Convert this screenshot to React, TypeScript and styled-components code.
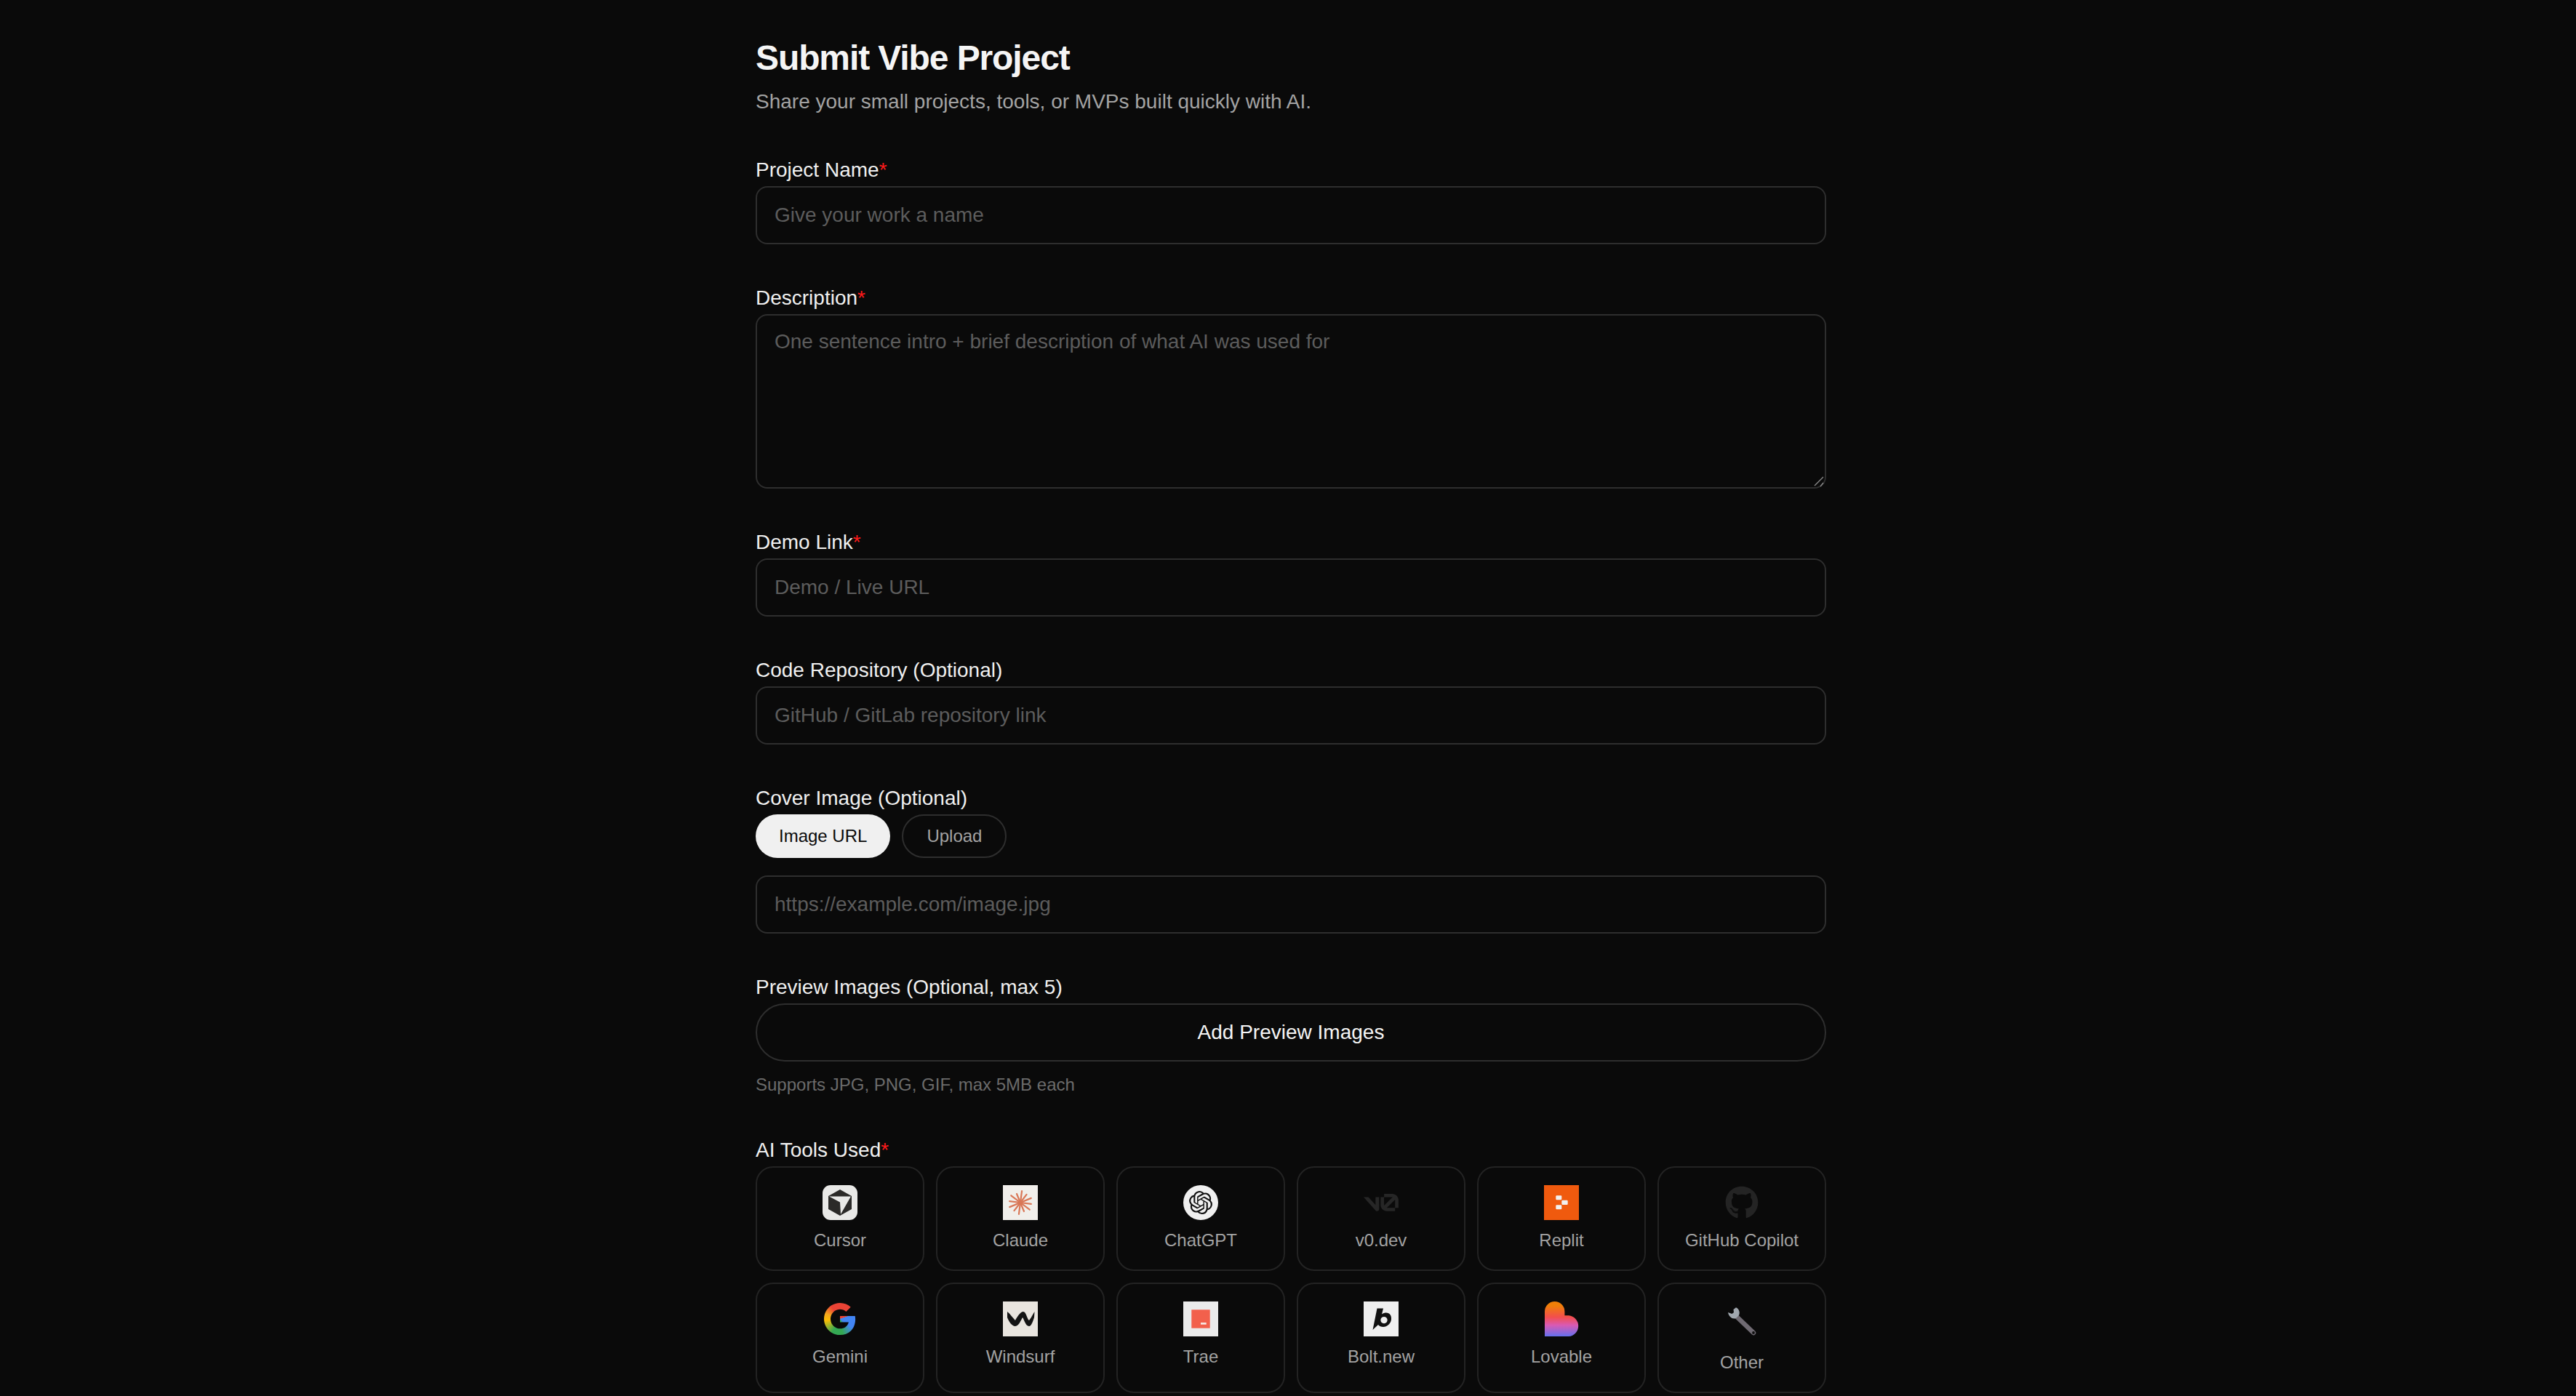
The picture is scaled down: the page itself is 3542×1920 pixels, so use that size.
import React from "react"
import styled, { createGlobalStyle } from "styled-components"
import { FaGithub } from "react-icons/fa"
import { SiOpenai } from "react-icons/si"

const GlobalStyle = createGlobalStyle`
  html, body {
    margin: 0;
    height: 100%;
    background: #0a0a0a;
    overflow: hidden;
  }
  * {
    box-sizing: border-box;
  }
`

const Page = styled.main`
  height: 1920px;
  overflow: hidden;
  background: #0a0a0a;
  padding: 48px 0 0 1039px;
  font-family: "Liberation Sans", Arial, sans-serif;
`

const Form = styled.form`
  width: 1472px;
  display: flex;
  flex-direction: column;
  gap: 56px;
`

const Header = styled.header`
  display: flex;
  flex-direction: column;
  gap: 8px;
`

const Title = styled.h1`
  margin: 0;
  font-size: 48px;
  line-height: 64px;
  font-weight: 700;
  letter-spacing: -1.1px;
  color: #f5f5f5;
`

const Subtitle = styled.p`
  margin: 0;
  font-size: 28px;
  line-height: 40px;
  color: #a3a3a3;
`

const Field = styled.div`
  display: flex;
  flex-direction: column;
`

const Label = styled.label`
  display: block;
  font-size: 28px;
  line-height: 36px;
  padding-bottom: 4px;
  color: #f0f0f0;
`

const Required = styled.span`
  color: #ff1a1a;
`

const TextInput = styled.input`
  display: block;
  width: 100%;
  height: 80px;
  padding: 0 24px;
  background: transparent;
  border: 2px solid #2e2e2e;
  border-radius: 16px;
  outline: none;
  font: inherit;
  font-size: 28px;
  color: #f5f5f5;

  &::placeholder {
    color: #5c5c5c;
    opacity: 1;
  }
`

const TextAreaWrap = styled.div`
  position: relative;
`

const TextArea = styled.textarea`
  display: block;
  width: 100%;
  height: 240px;
  padding: 16px 24px;
  background: transparent;
  border: 2px solid #2e2e2e;
  border-radius: 16px;
  outline: none;
  font: inherit;
  font-size: 28px;
  line-height: 40px;
  color: #f5f5f5;
  resize: none;

  &::placeholder {
    color: #5c5c5c;
    opacity: 1;
  }
`

const ResizeGrip = styled.svg`
  position: absolute;
  right: 2px;
  bottom: 2px;
  width: 16px;
  height: 16px;
  pointer-events: none;
`

const ModeTabs = styled.div`
  display: flex;
  gap: 16px;
  margin-bottom: 24px;
`

const ModeTab = styled.button<{ $active?: boolean }>`
  height: 60px;
  padding: 0 32px;
  border-radius: 30px;
  border: ${(p) => (p.$active ? "none" : "2px solid #2e2e2e")};
  background: ${(p) => (p.$active ? "#f0f0f0" : "transparent")};
  color: ${(p) => (p.$active ? "#0a0a0a" : "#a3a3a3")};
  font: inherit;
  font-size: 24px;
`

const AddButton = styled.button`
  display: block;
  width: 100%;
  height: 80px;
  background: transparent;
  border: 2px solid #2e2e2e;
  border-radius: 40px;
  color: #f5f5f5;
  font: inherit;
  font-size: 28px;
`

const Hint = styled.p`
  margin: 16px 0 0;
  font-size: 24px;
  line-height: 32px;
  color: #6b6b6b;
`

const ToolGrid = styled.div`
  display: grid;
  grid-template-columns: repeat(6, 1fr);
  gap: 16px;
`

const ToolCard = styled.button`
  display: flex;
  flex-direction: column;
  align-items: center;
  justify-content: flex-start;
  gap: 12px;
  padding: 24px 8px;
  background: transparent;
  border: 2px solid #232323;
  border-radius: 24px;
  font: inherit;
`

const ToolName = styled.span`
  font-size: 24px;
  line-height: 32px;
  color: #a3a3a3;
`

const LogoRound = styled.span`
  display: flex;
  align-items: center;
  justify-content: center;
  width: 48px;
  height: 48px;
  border-radius: 50%;
  background: #f0f0f0;
  color: #111;
`

const LogoBare = styled.span`
  display: flex;
  align-items: center;
  justify-content: center;
  width: 48px;
  height: 48px;
  color: #242424;
`

const GoogleG = styled.span`
  display: block;
  width: 48px;
  height: 48px;
  background: conic-gradient(
    from 0deg at 24px 24px,
    #ea4335 0deg,
    #ea4335 70deg,
    #4285f4 70deg,
    #4285f4 125deg,
    #34a853 170deg,
    #34a853 210deg,
    #fbbc05 265deg,
    #f4a71d 290deg,
    #ea4335 325deg,
    #ea4335 360deg
  );
  clip-path: path("M45.12 24.5c0-1.56-.14-3.06-.4-4.5H24v8.51h11.84c-.51 2.75-2.06 5.08-4.39 6.64v5.52h7.11c4.16-3.83 6.56-9.47 6.56-16.17zM24 46c5.94 0 10.92-1.97 14.56-5.33l-7.11-5.52c-1.97 1.32-4.49 2.12-7.45 2.12-5.73 0-10.58-3.87-12.31-9.07H4.34v5.7C7.96 41.07 15.4 46 24 46zM11.69 28.18C11.25 26.86 11 25.45 11 24s.25-2.86.69-4.18v-5.7H4.34C2.85 17.09 2 20.45 2 24c0 3.55.85 6.91 2.34 9.88l7.35-5.7zM24 10.75c3.23 0 6.13 1.11 8.41 3.29l6.31-6.31C34.91 4.18 29.93 2 24 2 15.4 2 7.96 6.93 4.34 14.12l7.35 5.7c1.73-5.2 6.58-9.07 12.31-9.07z");
`

const CursorLogo = () => (
  <svg width="48" height="48" viewBox="0 0 48 48">
    <rect width="48" height="48" rx="11" fill="#e9e9e7" />
    <path d="M24 6l16 9v18l-16 9-16-9V15z" fill="#2b2a28" />
    <path d="M9 15.5h30L25 40l-1-16.5z" fill="#e9e9e7" />
  </svg>
)

const ClaudeLogo = () => {
  const rays = [15, 16, 13, 16, 14, 16, 15, 16, 13, 16, 14, 16]
  return (
    <svg width="48" height="48" viewBox="0 0 48 48">
      <rect width="48" height="48" fill="#f1efeb" />
      {rays.map((len, i) => {
        const a = (i * Math.PI * 2) / rays.length + 0.13
        return (
          <line
            key={i}
            x1="24"
            y1="24"
            x2={24 + Math.cos(a) * len}
            y2={24 + Math.sin(a) * len}
            stroke="#d97757"
            strokeWidth="2.2"
            strokeLinecap="round"
          />
        )
      })}
    </svg>
  )
}

const V0Logo = () => (
  <svg width="48" height="24" viewBox="0 0 40 20" fill="#262626">
    <path d="M23.3919 0H32.9188C36.7819 0 39.9136 3.13165 39.9136 6.99475V16.0805H36.0006V6.99475C36.0006 6.90167 35.9969 6.80925 35.9898 6.71766L26.4628 16.079C26.4949 16.08 26.5272 16.0805 26.5595 16.0805H36.0006V19.7762H26.5595C22.6964 19.7762 19.4788 16.6139 19.4788 12.7508V3.68923H23.3919V12.7508C23.3919 12.9253 23.4054 13.0977 23.4316 13.2668L33.1682 3.6995C33.0861 3.6927 33.003 3.68923 32.9188 3.68923H23.3919V0Z" />
    <path d="M13.7688 19.0956L0 3.68759H5.53933L13.6231 12.7337V3.68759H17.7535V17.5746C17.7535 19.6705 15.1654 20.6584 13.7688 19.0956Z" />
  </svg>
)

const ReplitLogo = () => (
  <svg width="48" height="48" viewBox="0 0 48 48">
    <rect width="48" height="48" fill="#f05a0e" />
    <g fill="#f2f0ee">
      <rect x="16.3" y="14.3" width="8" height="6" rx="1.2" />
      <rect x="24.3" y="20.7" width="8.4" height="6.2" rx="1.2" />
      <rect x="16.3" y="27.3" width="8" height="6" rx="1.2" />
    </g>
  </svg>
)

const WindsurfLogo = () => (
  <svg width="48" height="48" viewBox="0 0 48 48">
    <rect width="48" height="48" fill="#e9e5df" />
    <path
      d="M6 14C10 17 13 22 17 26C19 22 24 14 28 14C32 14 33 24 36 26C38 24 41 18 43.5 14L43 22C41 28 39 34 36 34C31 34 29 24 27 22C25 25 22 34 17 34C12 34 8 27 6 22Z"
      fill="#141414"
    />
  </svg>
)

const TraeLogo = () => (
  <svg width="48" height="48" viewBox="0 0 48 48">
    <rect width="48" height="48" fill="#ebebeb" />
    <rect x="11.3" y="11.3" width="25.4" height="25.4" fill="#f2604c" />
    <rect x="24" y="29" width="7.7" height="2.7" fill="#f5e6e2" />
  </svg>
)

const BoltLogo = () => (
  <svg width="48" height="48" viewBox="0 0 48 48">
    <rect width="48" height="48" fill="#efefef" />
    <path
      fillRule="evenodd"
      d="M18.5 9.5H27L25 17.5C27 16 29 15.5 31 15.5C36 15.5 38.5 19.5 38 24.5C37.5 30.5 32 35 27 35C24 35 21.5 34 20 32L12.5 39ZM28 21a4.6 4.6 0 1 0 .01 0Z"
      fill="#111"
    />
  </svg>
)

const LovableLogo = () => (
  <svg width="48" height="48" viewBox="0 0 48 48">
    <defs>
      <linearGradient id="lovable" x1="0" y1="0" x2="0" y2="1">
        <stop offset="0.12" stopColor="#ef7f08" />
        <stop offset="0.45" stopColor="#f24e4e" />
        <stop offset="0.68" stopColor="#d95ab4" />
        <stop offset="1" stopColor="#6470ee" />
      </linearGradient>
    </defs>
    <path
      d="M1 14A13.7 14 0 0 1 28.4 14V19.3H34A14.4 14.4 0 0 1 34 48H1Z"
      fill="url(#lovable)"
    />
  </svg>
)

const WrenchLogo = () => (
  <svg width="56" height="56" viewBox="0 0 56 56">
    <line
      x1="20"
      y1="20"
      x2="44"
      y2="43"
      stroke="#6f6a72"
      strokeWidth="6.5"
      strokeLinecap="round"
    />
    <path
      d="M9 15L14.5 17L17 15L16.5 11L20 8.3C24 10 26 15 24 19L20 23C15 25 10 21 9 15Z"
      fill="#a0a7ae"
    />
    <circle cx="44" cy="43" r="1.9" fill="#111" />
  </svg>
)

const firstRow = [
  { name: "Cursor", logo: <CursorLogo /> },
  { name: "Claude", logo: <ClaudeLogo /> },
  {
    name: "ChatGPT",
    logo: (
      <LogoRound>
        <SiOpenai size={32} />
      </LogoRound>
    ),
  },
  {
    name: "v0.dev",
    logo: (
      <LogoBare>
        <V0Logo />
      </LogoBare>
    ),
  },
  { name: "Replit", logo: <ReplitLogo /> },
  {
    name: "GitHub Copilot",
    logo: (
      <LogoBare>
        <FaGithub size={46} />
      </LogoBare>
    ),
  },
]

const secondRow = [
  { name: "Gemini", logo: <GoogleG /> },
  { name: "Windsurf", logo: <WindsurfLogo /> },
  { name: "Trae", logo: <TraeLogo /> },
  { name: "Bolt.new", logo: <BoltLogo /> },
  { name: "Lovable", logo: <LovableLogo /> },
  { name: "Other", logo: <WrenchLogo /> },
]

export default function App() {
  return (
    <Page>
      <GlobalStyle />
      <Form>
        <Header>
          <Title>Submit Vibe Project</Title>
          <Subtitle>Share your small projects, tools, or MVPs built quickly with AI.</Subtitle>
        </Header>

        <Field>
          <Label>
            Project Name<Required>*</Required>
          </Label>
          <TextInput placeholder="Give your work a name" />
        </Field>

        <Field>
          <Label>
            Description<Required>*</Required>
          </Label>
          <TextAreaWrap>
            <TextArea placeholder="One sentence intro + brief description of what AI was used for" />
            <ResizeGrip viewBox="0 0 16 16">
              <path d="M2 14L14 2M10 15L14 10" stroke="#8a8a8a" strokeWidth="1.4" fill="none" />
            </ResizeGrip>
          </TextAreaWrap>
        </Field>

        <Field>
          <Label>
            Demo Link<Required>*</Required>
          </Label>
          <TextInput placeholder="Demo / Live URL" />
        </Field>

        <Field>
          <Label>Code Repository (Optional)</Label>
          <TextInput placeholder="GitHub / GitLab repository link" />
        </Field>

        <Field>
          <Label>Cover Image (Optional)</Label>
          <ModeTabs>
            <ModeTab type="button" $active>
              Image URL
            </ModeTab>
            <ModeTab type="button">Upload</ModeTab>
          </ModeTabs>
          <TextInput placeholder="https://example.com/image.jpg" />
        </Field>

        <Field>
          <Label>Preview Images (Optional, max 5)</Label>
          <AddButton type="button">Add Preview Images</AddButton>
          <Hint>Supports JPG, PNG, GIF, max 5MB each</Hint>
        </Field>

        <Field>
          <Label>
            AI Tools Used<Required>*</Required>
          </Label>
          <ToolGrid>
            {[...firstRow, ...secondRow].map((tool) => (
              <ToolCard type="button" key={tool.name}>
                {tool.logo}
                <ToolName>{tool.name}</ToolName>
              </ToolCard>
            ))}
          </ToolGrid>
        </Field>
      </Form>
    </Page>
  )
}
